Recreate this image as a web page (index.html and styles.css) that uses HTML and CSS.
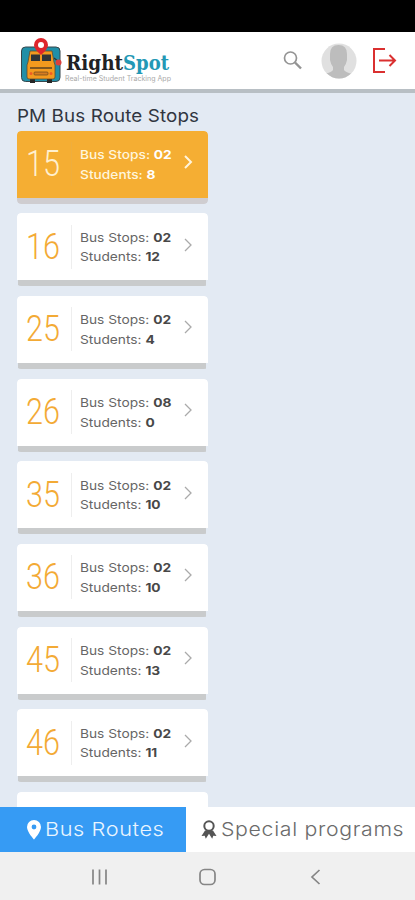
FILE: index.html
```html
<!DOCTYPE html>
<html lang="en">
<head>
<meta charset="utf-8">
<title>RightSpot</title>
<link rel="stylesheet" href="styles.css">
</head>
<body>
<div class="status"></div>
<header class="header">
  <svg class="logo" width="156" height="50" viewBox="0 0 156 50">
    <rect x="1.5" y="9" width="38.500" height="34.500" rx="4" fill="#208fa7" stroke="#37474c"/>
    <path d="M34 20l5 4" stroke="#333" stroke-width="1.5"/>
    <circle cx="38.500" cy="24.500" r="3" fill="#d9403d"/>
    <path d="M10 41h5v4h-5zM27 41h5v4h-5z" fill="#252525"/>
    <path d="M10 13h22l2 11 1 3v12q0 2-2 2H9q-2 0-2-2V27l1-3z" fill="#f39a1e" stroke="#5d4c31" stroke-width=".8"/>
    <path d="M11 16.500h9v6.500h-9zM22 16.500h9v6.500h-9z" fill="#303538"/>
    <path d="M10 30h22" stroke="#5b4020" stroke-width="1.500"/>
    <rect x="14" y="34" width="14" height="3" rx="1" fill="#d57c20" stroke="#654520" stroke-width=".7"/>
    <circle cx="11" cy="35.500" r="1.500" fill="#f05c24"/><circle cx="31" cy="35.500" r="1.500" fill="#f05c24"/>
    <path d="M21 17q-7-6-7-10a7 7 0 0 1 14 0q0 4-7 10z" fill="#de262c"/>
    <circle cx="21" cy="7" r="3" fill="#fff"/>
    <text class="logo-name" x="46" y="32" textLength="57" lengthAdjust="spacingAndGlyphs">Right</text>
    <text class="logo-name logo-spot" x="103" y="32" textLength="46" lengthAdjust="spacingAndGlyphs">Spot</text>
    <text class="logo-tag" x="45" y="42.500" textLength="106" lengthAdjust="spacingAndGlyphs">Real-time Student Tracking App</text>
  </svg>
  <svg class="actions" width="120" height="44" viewBox="0 0 120 44">
    <g fill="none" stroke="#949494" stroke-width="1.7"><circle cx="11.500" cy="20" r="6"/><path d="M16 24.500l6 6" stroke-width="2.400"/></g>
    <clipPath id="face"><circle cx="60" cy="23" r="17.500"/></clipPath>
    <g clip-path="url(#face)"><rect x="40" y="4" width="38" height="38" fill="#e0e0e0"/><path d="M51 16q0-9 8.500-9t8.500 9v6q-1 5-3 7v3q1 2 8 4v6H46v-6q7-2 8-4v-3q-2-2-3-7z" fill="#bdbdbd"/></g>
    <path d="M106 11H95v23h11M100 22.500h16M110.500 17l5.500 5.500-5.500 5.500" fill="none" stroke="#da3030" stroke-width="2"/>
  </svg>
</header>
<main class="content">
  <h1 class="title">PM Bus Route Stops</h1>
  <div class="routes" id="routes"></div>
</main>
<nav class="tabs">
  <div class="tab tab-active">
    <svg width="16" height="20" viewBox="0 0 16 20"><path fill="#fff" fill-rule="evenodd" d="M8 0a7 7 0 0 1 7 7c0 5-7 12.500-7 12.500S1 12 1 7a7 7 0 0 1 7-7zm0 4.600a2.400 2.400 0 1 0 0 4.800 2.400 2.400 0 0 0 0-4.800z"/></svg>
    <span class="tab-text routes-text">Bus Routes</span>
  </div>
  <div class="tab">
    <svg width="16" height="20" viewBox="0 0 16 20"><path d="M4 10.500L.5 16l3.200-.2 1.100 3 3.200-5 3.200 5 1.100-3 3.200.2-3.500-5.500" fill="#555"/><circle cx="8" cy="6" r="4.700" fill="#fff" stroke="#555" stroke-width="2"/></svg>
    <span class="tab-text programs-text">Special programs</span>
  </div>
</nav>
<footer class="system">
  <svg width="415" height="48" viewBox="0 0 415 48" fill="none" stroke="#858585" stroke-width="1.700"><path d="M93 17.500v15M99.500 17.500v15M106 17.500v15"/><rect x="200" y="17.500" width="15" height="15" rx="4.500"/><path d="M319.500 18l-7.500 7 7.500 7"/></svg>
</footer>
<script src="app.js"></script>
</body>
</html>
```
FILE: styles.css
```css
* { box-sizing: border-box; }
body { margin: 0; width: 415px; height: 900px; overflow: hidden; display: flex; flex-direction: column; background: #e3eaf3; font-family: Inter, sans-serif; }
.status { height: 32px; background: #000; flex: none; }
.header { height: 61px; flex: none; background: #fff; border-bottom: 4px solid #b8bfc4; display: flex; justify-content: space-between; padding: 6px 16px 0 20px; }
.logo { overflow: visible; }
.logo-name { font: bold 20px "DejaVu Serif", serif; fill: #202124; }
.logo-spot { fill: #2398b5; }
.logo-tag { font: 7px Inter, sans-serif; fill: #aaa; }
.content { flex: 1; min-height: 0; overflow: hidden; padding: 10px 17px 0; }
.title { margin: 0; width: 190px; height: 27.500px; font-size: 17.500px; line-height: 25px; font-weight: 400; letter-spacing: .1px; color: #303540; white-space: nowrap; transform: scaleX(1.075); transform-origin: left; }
.routes { width: 191px; display: flex; flex-direction: column; gap: 9.700px; }
.card { height: 73px; flex: none; display: flex; flex-direction: column; border-radius: 4px; overflow: hidden; }
.card-body { height: 67px; background: #fff; border-radius: 4px 4px 0 0; display: flex; align-items: center; color: #666; }
.card-base { height: 6px; margin: 0 2px 0 1px; background: #c9cbcc; }
.active .card-body { background: #f5ae33; color: #fff5dc; }
.active .card-base { margin: 0; background: #cfcdd0; border-radius: 0 0 4px 4px; }
.number { width: 55px; height: 44px; line-height: 44px; border-right: 1px solid #eeeeee; color: #f3aa35; }
.number span { display: block; width: 44px; margin-left: 9px; font: 300 36px/44px Roboto, sans-serif; transform: scaleX(.85); transform-origin: left; }
.active .number { color: #fff0cf; border-color: #efae3d; }
.details { width: 90px; margin: 1px 12px 0 8px; font-size: 12px; line-height: 19.500px; white-space: nowrap; transform: scaleX(1.145); transform-origin: left; }
.details b { color: #484848; }
.active .details { font-weight: 500; }
.active b { color: #fff; }
.arrow { margin-top: -4px; fill: none; stroke: #aaa; stroke-width: 1.300; }
.active .arrow { stroke: #fff5dc; stroke-width: 2; }
.tabs { height: 45px; flex: none; display: flex; background: #fff; }
.tab { display: flex; align-items: center; flex: 1; min-width: 0; padding-left: 15px; gap: 4px; color: #6b6b6b; }
.tab svg { flex: none; }
.tab-active { flex: 0 0 186px; padding-left: 26px; gap: 3px; background: #369bf4; color: #e9f5ff; }
.tab-text { font-size: 19px; line-height: 26px; white-space: nowrap; font-weight: 350; transform-origin: left; }
.routes-text { letter-spacing: .5px; transform: scaleX(1.145); }
.programs-text { letter-spacing: .6px; transform: scaleX(1.12); }
.system { height: 48px; flex: none; background: #f0f0f0; }
.system svg { display: block; }
```
FILE: app.js
```js
const routes = [["15","02","8"],["16","02","12"],["25","02","4"],["26","08","0"],["35","02","10"],["36","02","10"],["45","02","13"],["46","02","11"]];
const list = document.getElementById("routes");
routes.forEach(([number, stops, students], index) => {
  const card = document.createElement("article");
  card.className = index === 0 ? "card active" : "card";
  card.innerHTML = `<div class="card-body"><div class="number"><span>${number}</span></div><div class="details"><div>Bus Stops: <b>${stops}</b></div><div>Students: <b>${students}</b></div></div><svg class="arrow" width="12" height="16" viewBox="0 0 12 16"><path d="M3 2l6 6-6 6"/></svg></div><div class="card-base"></div>`;
  list.append(card);
});
const next = document.createElement("article");
next.className = "card";
next.innerHTML = '<div class="card-body"></div>';
list.append(next);
```
